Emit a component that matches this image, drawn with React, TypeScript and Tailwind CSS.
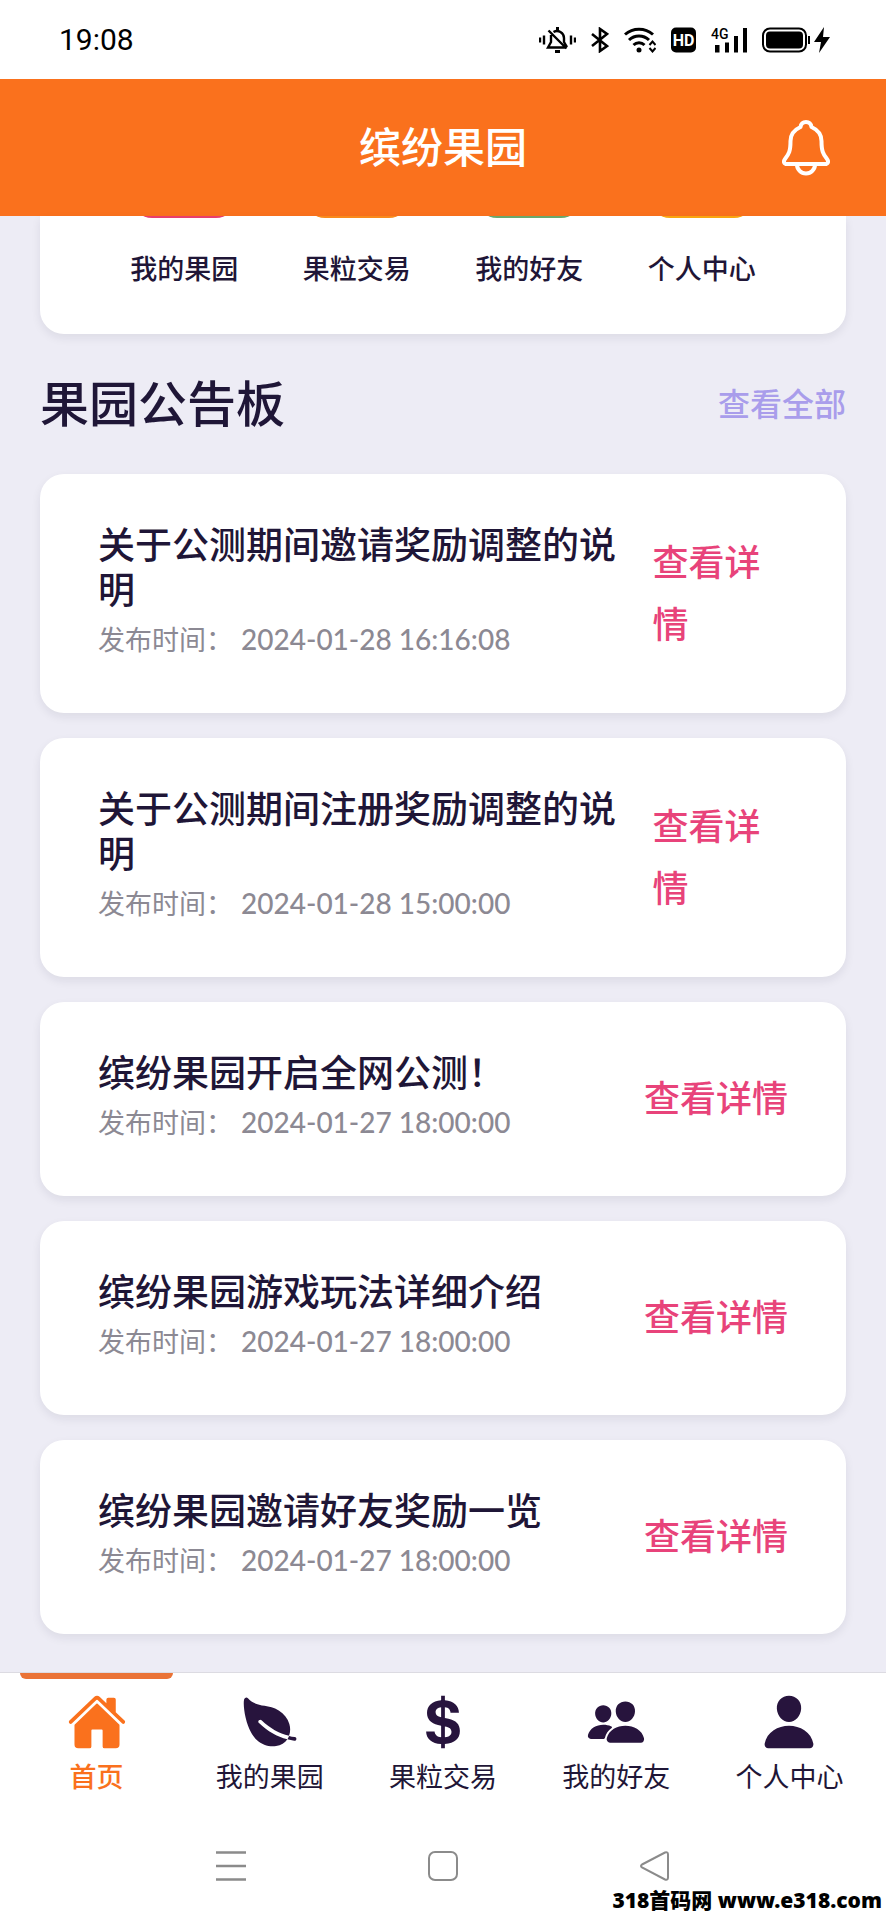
import type { ReactNode } from "react";
import { IoHome, IoLeaf, IoLogoUsd, IoPeople, IoPerson } from "react-icons/io5";

type Notice = { title: string; time: string };

const shortcuts = [
  { label: "我的果园", color: "bg-[#e83e6c]" },
  { label: "果粒交易", color: "bg-[#f98a1c]" },
  { label: "我的好友", color: "bg-[#6aa76b]" },
  { label: "个人中心", color: "bg-[#f9a60f]" },
];

const notices: Notice[] = [
  { title: "关于公测期间邀请奖励调整的说明", time: "2024-01-28 16:16:08" },
  { title: "关于公测期间注册奖励调整的说明", time: "2024-01-28 15:00:00" },
  { title: "缤纷果园开启全网公测！", time: "2024-01-27 18:00:00" },
  { title: "缤纷果园游戏玩法详细介绍", time: "2024-01-27 18:00:00" },
  { title: "缤纷果园邀请好友奖励一览", time: "2024-01-27 18:00:00" },
];

const tabs: { label: string; icon: ReactNode; active?: boolean }[] = [
  { label: "首页", icon: <IoHome size={60} />, active: true },
  { label: "我的果园", icon: <IoLeaf size={60} /> },
  { label: "果粒交易", icon: <IoLogoUsd size={60} /> },
  { label: "我的好友", icon: <IoPeople size={60} /> },
  { label: "个人中心", icon: <IoPerson size={60} /> },
];

function BellIcon() {
  return (
    <svg width="48" height="56" viewBox="0 0 48 56" fill="none" stroke="currentColor" strokeWidth="4">
      <path
        d="M24 2c-3 0-5 2-5.500 5C13 9.500 8.500 14 8.500 21c0 10-1.500 13-5.500 18-2 2.500-1 5 2 5h38c3 0 4-2.500 2-5-4-5-5.500-8-5.500-18 0-7-4.500-11.500-10-14C29 4 27 2 24 2z"
        strokeLinejoin="round"
      />
      <path d="M15 44.500c0 5 4 9 9 9s9-4 9-9" />
    </svg>
  );
}

function StatusBar() {
  return (
    <div className="flex h-[79px] items-center justify-between bg-white pr-14 pl-[59px] text-black">
      <span className="font-['Roboto',sans-serif] text-[30px]">19:08</span>
      <div className="flex items-center gap-[15px]">
        {/* muted bell */}
        <svg width="37" height="26" viewBox="0 0 37 26" fill="none" stroke="currentColor" strokeWidth="2.400">
          <path d="M1 10.500v5M5 8.500v9M32 8.500v9M36 10.500v5" />
          <path d="M12 8v7l-3 5.500h17M14.500 5a7 7 0 0 1 10.500 6v4l3 5M9.500 3.500l18 18" />
          <path d="M18.500 0v3M16 24.500h5" strokeWidth="3" />
        </svg>
        {/* bluetooth */}
        <svg width="18" height="26" viewBox="0 0 18 26" fill="none" stroke="currentColor" strokeWidth="2.600">
          <path d="M1 7l15 12-7 5V2l7 5L1 19" />
        </svg>
        {/* wifi */}
        <svg width="32" height="26" viewBox="0 0 32 26" fill="none" stroke="currentColor" strokeWidth="3">
          <path d="M1 7.500a21 21 0 0 1 28 0M5 13a14.500 14.500 0 0 1 20 0M9.500 18a8 8 0 0 1 11 0" />
          <circle cx="15" cy="23" r="2.500" fill="currentColor" stroke="none" />
          <path d="M25.500 18l3-3.500 3 3.500M25.500 21l3 3.500 3-3.500" strokeWidth="2" />
        </svg>
        {/* HD */}
        <svg width="25" height="26" viewBox="0 0 25 26" className="overflow-visible">
          <rect y="0.500" width="25" height="25" rx="5" fill="currentColor" />
          <text
            x="12.500"
            y="19"
            textAnchor="middle"
            fill="#fff"
            className="font-['Roboto',sans-serif] text-[16px] font-bold"
          >
            HD
          </text>
        </svg>
        {/* 4G signal */}
        <svg width="36" height="26" viewBox="0 0 36 26" className="overflow-visible">
          <text x="0" y="12" fill="currentColor" className="font-['Roboto',sans-serif] text-[14px] font-medium">
            4G
          </text>
          <path d="M4 18h4.500v7.500H4zM14 15.500h4v10h-4zM23 9h4v16.500h-4zM32 1h4v24.500h-4z" fill="currentColor" />
        </svg>
        {/* battery */}
        <svg width="68" height="26" viewBox="0 0 68 26">
          <rect x="1" y="1.500" width="43" height="23" rx="7" fill="none" stroke="currentColor" strokeWidth="2" />
          <rect x="4" y="4.500" width="37" height="17" rx="4" fill="currentColor" />
          <path d="M46 9h2v8h-2zM62 0L52 15h7l-2 11 11-16h-7z" fill="currentColor" />
        </svg>
      </div>
    </div>
  );
}

function NoticeCard({ title, time }: Notice) {
  return (
    <article className="flex items-center justify-between rounded-3xl bg-white px-[58px] pt-12 pb-[50px] shadow-[0_4px_10px_rgba(30,20,50,0.08)]">
      <div className="pr-8">
        <h3 className="text-[37px] leading-[45px] font-medium text-[#1f1637]">{title}</h3>
        <p className="mt-1 flex items-center text-[27px] leading-[47px] text-[#8c8993]">
          <span>发布时间：</span>
          <time className="ml-2 text-[28px] font-medium">{time}</time>
        </p>
      </div>
      <a href="#" className="text-[36px] leading-[62px] font-medium text-[#e8437a]">
        查看详情
      </a>
    </article>
  );
}

function SystemBar() {
  return (
    <div className="relative grid h-[120px] grid-cols-3 items-center justify-items-center bg-white px-[125px] pt-3 text-[#8b8b8b]">
      <button aria-label="菜单">
        <svg width="30" height="30" viewBox="0 0 30 30" stroke="currentColor" strokeWidth="2.500">
          <path d="M0 1.500h30M0 15h30M0 28.500h30" />
        </svg>
      </button>
      <button aria-label="主屏幕">
        <svg width="30" height="30" viewBox="0 0 30 30" fill="none" stroke="currentColor" strokeWidth="2">
          <rect x="1" y="1" width="28" height="28" rx="6" />
        </svg>
      </button>
      <button aria-label="返回">
        <svg width="30" height="30" viewBox="0 0 30 30" fill="none" stroke="currentColor" strokeWidth="2">
          <path d="M2 13.500L25 1.500q3-1 3 2v23q0 3-3 2L2 16.500q-2-1.500 0-3z" />
        </svg>
      </button>
      <span className="absolute right-1 bottom-1 font-['Noto_Sans','Noto_Sans_CJK_SC',sans-serif] text-[21px] leading-8 font-black whitespace-nowrap text-black">
        318首码网 www.e318.com
      </span>
    </div>
  );
}

export default function App() {
  return (
    <div className="flex min-h-screen flex-col bg-[#edecf5] font-['Lato','Noto_Sans_CJK_SC',sans-serif]">
      <StatusBar />

      <header className="grid h-[137px] grid-cols-[1fr_auto_1fr] items-center bg-[#fa711d] px-14 text-white">
        <h1 className="col-start-2 text-[42px] font-medium">缤纷果园</h1>
        <button aria-label="通知" className="justify-self-end">
          <BellIcon />
        </button>
      </header>

      <main className="flex-1 px-10 pb-[38px]">
        <nav className="grid grid-cols-4 rounded-b-3xl bg-white px-[58px] pb-[45px] shadow-[0_4px_10px_rgba(30,20,50,0.08)]">
          {shortcuts.map((s) => (
            <a key={s.label} href="#" className="flex flex-col items-center text-[27px] font-medium text-[#1f1637]">
              <span className="flex h-[2px] w-[104px] items-end overflow-hidden">
                <span className={`h-[104px] w-full shrink-0 rounded-[20px] ${s.color}`} />
              </span>
              <span className="mt-[31px] leading-10">{s.label}</span>
            </a>
          ))}
        </nav>

        <div className="flex h-[140px] items-center justify-between">
          <h2 className="text-[49px] font-medium text-[#1f1637]">果园公告板</h2>
          <a href="#" className="text-[32px] font-medium text-[#a99deb]">
            查看全部
          </a>
        </div>

        <div className="flex flex-col gap-[25px]">
          {notices.map((n) => (
            <NoticeCard key={n.title} {...n} />
          ))}
        </div>
      </main>

      <nav className="grid grid-cols-5 border-t border-[#dcdbe2] bg-white px-[10px] pb-[3px]">
        {tabs.map((t) => (
          <a
            key={t.label}
            href="#"
            className={`flex flex-col items-center text-[27px] ${
              t.active ? "font-medium text-[#fa711d]" : "text-[#1f1637]"
            }`}
          >
            <span className={`h-[6px] w-[153px] rounded-b-md ${t.active ? "bg-[#ea7336]" : ""}`} />
            <span className={`mt-[13px] ${t.active ? "" : "text-[#27143d]"}`}>{t.icon}</span>
            <span className="mt-[5px] leading-10">{t.label}</span>
          </a>
        ))}
      </nav>

      <SystemBar />
    </div>
  );
}
